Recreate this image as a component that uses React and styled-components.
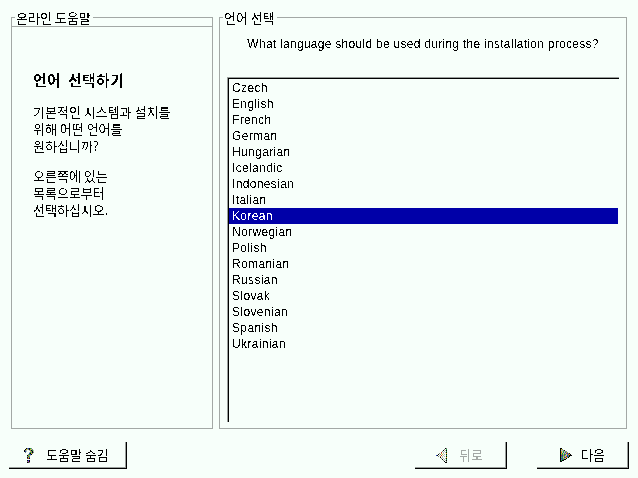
import React from "react";
import styled, { createGlobalStyle, css } from "styled-components";

const Global = createGlobalStyle`
  html, body { margin: 0; padding: 0; background: #f7fffa; }
  * { box-sizing: border-box; }
`;

const crisp = css`
  filter: url(#crisp);
`;

const Page = styled.div`
  width: 638px;
  height: 478px;
  background: #f7fffa;
  color: #000;
  font-family: "Liberation Sans", "Noto Sans CJK KR", sans-serif;
  font-size: 12px;
  display: flex;
  flex-direction: column;
  overflow: hidden;
`;

const Panels = styled.div`
  display: flex;
  gap: 6px;
  padding: 10px 0 0 11px;
  height: 429px;
`;

const Frame = styled.fieldset`
  margin: 0;
  padding: 0;
  min-width: 0;
  width: ${(p) => p.$width}px;
  border: 1px solid #a3a8a5;
  display: flex;
  flex-direction: column;
`;

const Legend = styled.legend`
  margin-left: 3px;
  padding: 0 2px 0 1px;
  height: 15px;
  line-height: 15px;
  font-family: "Noto Sans CJK KR", sans-serif;
  font-size: 13px;
  ${crisp}
`;

const HelpBody = styled.div`
  flex: 1;
  margin-top: 1px;
  border-top: 1px solid #a3a8a5;
  padding: 44px 0 0 21px;
`;

const HelpTitle = styled.h2`
  margin: 0 0 14px;
  font: bold 15px/18px "Noto Sans CJK KR", sans-serif;
  letter-spacing: 0.3px;
  word-spacing: 3px;
  ${crisp}
`;

const HelpText = styled.p`
  margin: 0 0 13px;
  font: 13px/17px "Noto Sans CJK KR", sans-serif;
  white-space: pre-line;
  ${crisp}
`;

const Question = styled.div`
  height: 16px;
  margin-top: 11px;
  line-height: 16px;
  text-align: center;
  letter-spacing: 0.28px;
  ${crisp}
`;

const LangList = styled.ul`
  list-style: none;
  margin: 25px 0 0 7px;
  padding: 2px 0 0;
  width: 392px;
  height: 345px;
  border-top: 1px solid #9a9f9c;
  border-left: 1px solid #9a9f9c;
  box-shadow: inset 1px 1px 0 #000;
`;

const LangRow = styled.li`
  height: 16px;
  line-height: 16px;
  margin: 0 0 0 1px;
  width: 389px;
  padding-left: 3px;
  letter-spacing: 0.36px;
  background: ${(p) => (p.$selected ? "#0000a8" : "transparent")};
  color: ${(p) => (p.$selected ? "#fff" : "#000")};
`;

const LangLabel = styled.span`
  ${crisp}
`;

const Footer = styled.div`
  display: flex;
  gap: 30px;
  padding: 13px 9px 0 9px;
`;

const Button = styled.div`
  width: ${(p) => p.$width}px;
  height: 27px;
  margin-right: ${(p) => (p.$push ? "auto" : "0")};
  display: flex;
  align-items: center;
  gap: ${(p) => p.$gap}px;
  padding-left: ${(p) => p.$pad}px;
  border-right: 1px solid #000;
  border-bottom: 1px solid #000;
  box-shadow: inset -1px -1px 0 #9a9f9c;
  color: ${(p) => (p.$disabled ? "#a3a8a5" : "#000")};
`;

const ButtonLabel = styled.span`
  font: 13px/16px "Noto Sans CJK KR", sans-serif;
  ${crisp}
`;

const HiddenSvg = styled.svg`
  position: absolute;
  width: 0;
  height: 0;
`;

const palette = {
  k: "#000",
  d: "#444",
  g: "#7a8a7a",
  l: "#b8c0b8",
  b: "#2040c0",
  y: "#d0c020",
  r: "#c03030",
  e: "#20a040",
  m: "#b030b0",
  o: "#d08020",
};

function PixelIcon({ map }) {
  const w = map[0].length;
  return (
    <svg width={w} height={map.length} viewBox={`0 0 ${w} ${map.length}`} shapeRendering="crispEdges">
      {map.flatMap((row, y) =>
        [...row].map((c, x) =>
          palette[c] ? <rect key={`${x}-${y}`} x={x} y={y} width="1" height="1" fill={palette[c]} /> : null
        )
      )}
    </svg>
  );
}

const helpIcon = [
  "..kgbkeg..",
  ".kylgkylg.",
  "kgl..lgkel",
  "kbl...ygkl",
  ".g...legkg",
  ".....bkyg.",
  "....gebk..",
  "...kgyl...",
  "...geg....",
  "...kyb....",
  "...drk....",
  "..........",
  "...kbk....",
  "...gmk....",
  "...kdg....",
];

const backIcon = [
  "..........kg",
  ".........g.e",
  "........k.lk",
  ".......g.l.e",
  "......r.l.lk",
  "....g.o.l..y",
  "...k.g.y.l.k",
  ".bk.l.r.l..e",
  "...g.o.l.l.k",
  ".....k.l...y",
  "......g.l.lk",
  ".......k.l.e",
  "........g.lk",
  ".........k.g",
  "..........kk",
];

const nextIcon = [
  "kk..........",
  "kyg.........",
  "kllgk.......",
  "kylelgg.....",
  "kolelbyg....",
  "kyelglrbgk..",
  "kgeybelgryk.",
  "krbgeylbgkkk",
  "kebyglrbek..",
  "kgelbrygk...",
  "kbegylk.....",
  "kgbekk......",
  "kekk........",
  "kk..........",
];

const languages = [
  "Czech", "English", "French", "German", "Hungarian", "Icelandic", "Indonesian", "Italian", "Korean",
  "Norwegian", "Polish", "Romanian", "Russian", "Slovak", "Slovenian", "Spanish", "Ukrainian",
];

export default function App() {
  return (
    <Page>
      <Global />
      <HiddenSvg aria-hidden="true">
        <filter id="crisp" x="0" y="0" width="100%" height="100%" colorInterpolationFilters="sRGB">
          <feComponentTransfer>
            <feFuncA type="discrete" tableValues="0 1" />
          </feComponentTransfer>
        </filter>
      </HiddenSvg>
      <Panels>
        <Frame $width={202}>
          <Legend>온라인 도움말</Legend>
          <HelpBody>
            <HelpTitle>언어 선택하기</HelpTitle>
            <HelpText>{"기본적인 시스템과 설치를\n위해 어떤 언어를\n원하십니까?"}</HelpText>
            <HelpText>{"오른쪽에 있는\n목록으로부터\n선택하십시오."}</HelpText>
          </HelpBody>
        </Frame>
        <Frame $width={408}>
          <Legend>언어 선택</Legend>
          <Question>What language should be used during the installation process?</Question>
          <LangList>
            {languages.map((l) => (
              <LangRow key={l} $selected={l === "Korean"}>
                <LangLabel>{l}</LangLabel>
              </LangRow>
            ))}
          </LangList>
        </Frame>
      </Panels>
      <Footer>
        <Button $width={118} $pad={15} $gap={12} $push>
          <PixelIcon map={helpIcon} />
          <ButtonLabel>도움말 숨김</ButtonLabel>
        </Button>
        <Button $width={92} $pad={20} $gap={12} $disabled>
          <PixelIcon map={backIcon} />
          <ButtonLabel>뒤로</ButtonLabel>
        </Button>
        <Button $width={92} $pad={23} $gap={9}>
          <PixelIcon map={nextIcon} />
          <ButtonLabel>다음</ButtonLabel>
        </Button>
      </Footer>
    </Page>
  );
}
